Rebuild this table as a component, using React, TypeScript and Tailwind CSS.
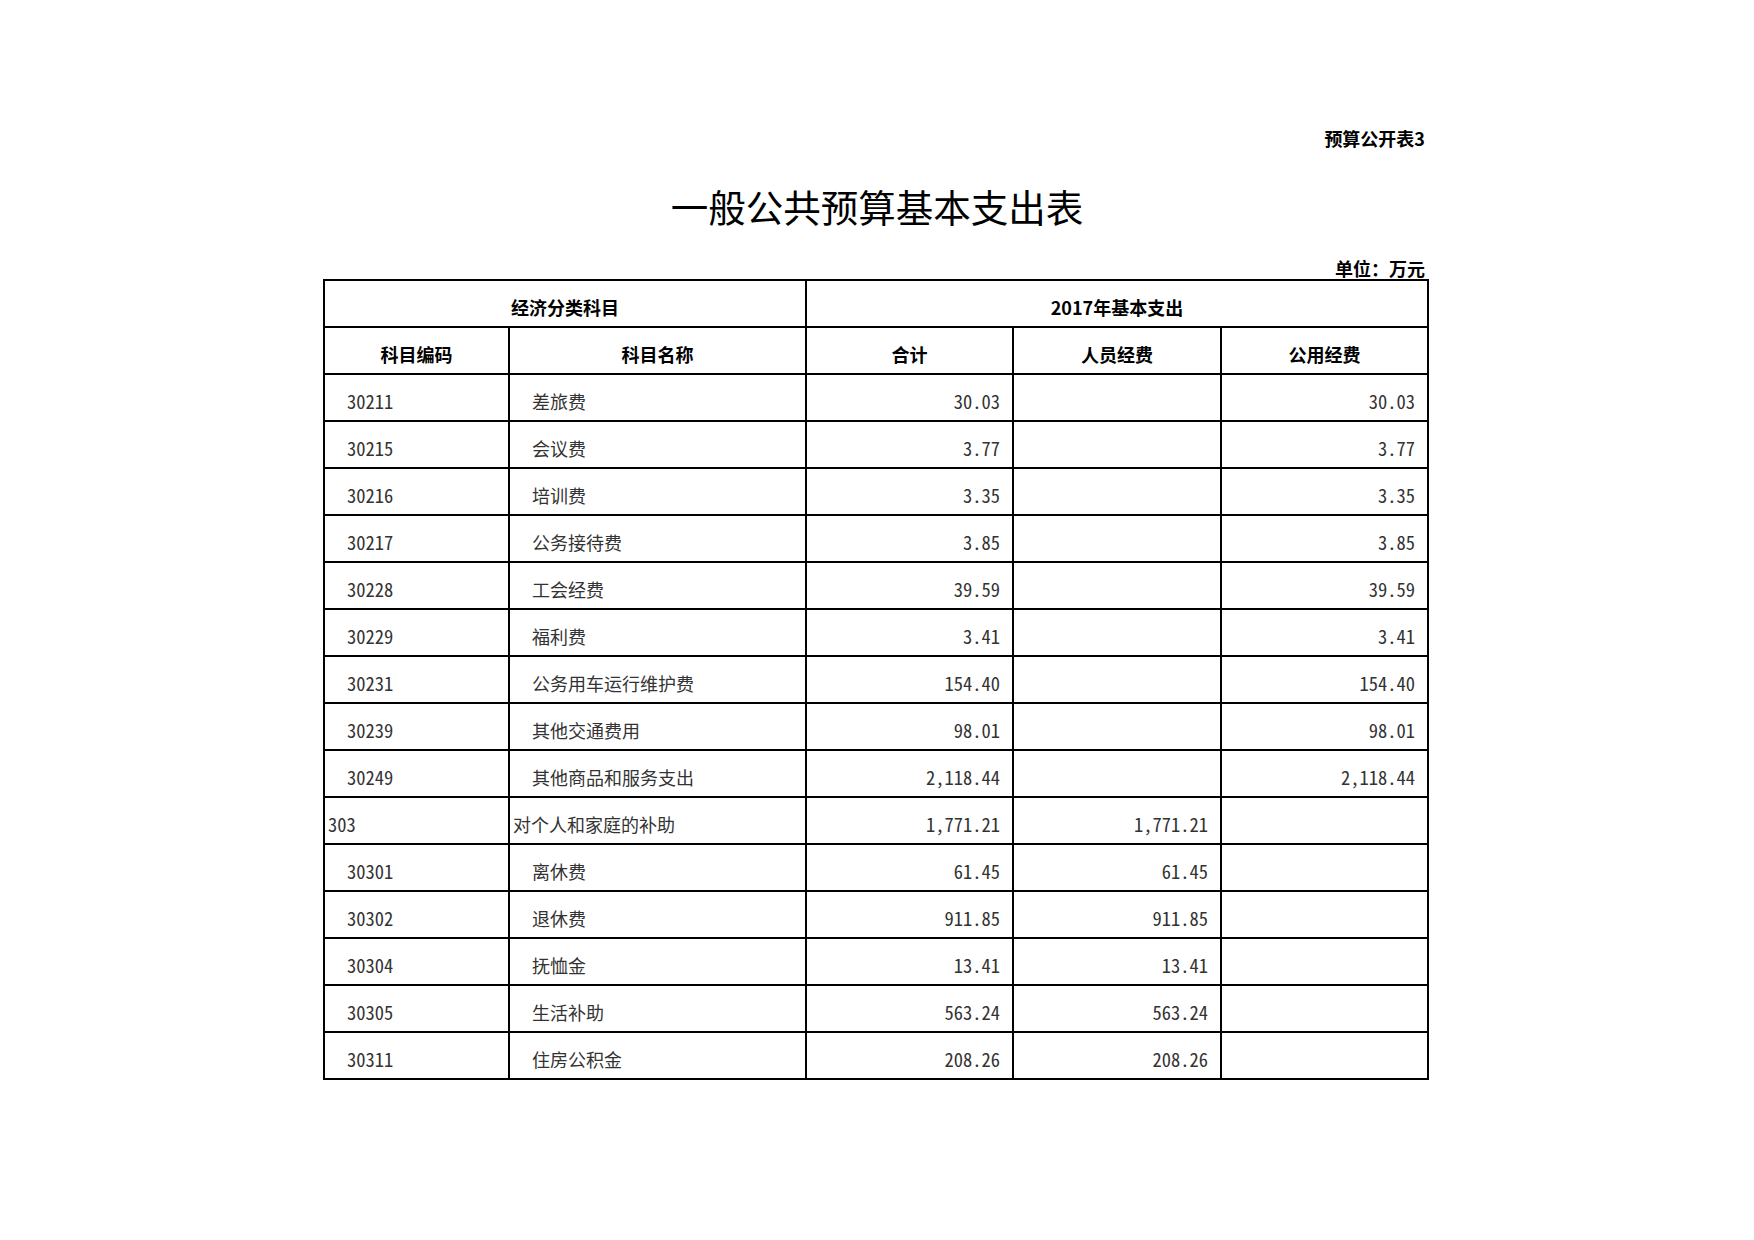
import React from "react";

type Row = {
  code: string;
  name: string;
  total: string;
  staff: string;
  pub: string;
  top?: boolean;
};

const rows: Row[] = [
  { code: "30211", name: "差旅费", total: "30.03", staff: "", pub: "30.03" },
  { code: "30215", name: "会议费", total: "3.77", staff: "", pub: "3.77" },
  { code: "30216", name: "培训费", total: "3.35", staff: "", pub: "3.35" },
  { code: "30217", name: "公务接待费", total: "3.85", staff: "", pub: "3.85" },
  { code: "30228", name: "工会经费", total: "39.59", staff: "", pub: "39.59" },
  { code: "30229", name: "福利费", total: "3.41", staff: "", pub: "3.41" },
  { code: "30231", name: "公务用车运行维护费", total: "154.40", staff: "", pub: "154.40" },
  { code: "30239", name: "其他交通费用", total: "98.01", staff: "", pub: "98.01" },
  { code: "30249", name: "其他商品和服务支出", total: "2,118.44", staff: "", pub: "2,118.44" },
  { code: "303", name: "对个人和家庭的补助", total: "1,771.21", staff: "1,771.21", pub: "", top: true },
  { code: "30301", name: "离休费", total: "61.45", staff: "61.45", pub: "" },
  { code: "30302", name: "退休费", total: "911.85", staff: "911.85", pub: "" },
  { code: "30304", name: "抚恤金", total: "13.41", staff: "13.41", pub: "" },
  { code: "30305", name: "生活补助", total: "563.24", staff: "563.24", pub: "" },
  { code: "30311", name: "住房公积金", total: "208.26", staff: "208.26", pub: "" },
];

const sans = { fontFamily: '"Noto Sans CJK SC", "Noto Sans", sans-serif' };
const mono = {
  fontFamily: '"Noto Sans Mono CJK SC", "Noto Sans CJK SC", "Liberation Mono", monospace',
};

export default function App() {
  return (
    <div className="w-[1754px] h-[1240px] bg-white text-black" style={sans}>
      <div className="w-[1108px] mx-auto pt-[126px]">
        <div className="text-right pr-[6px] text-[18px] leading-[24px] font-bold">
          预算公开表3
        </div>
        <div className="mt-[32px] text-center text-[37.5px] leading-[48px]">
          一般公共预算基本支出表
        </div>
        <div className="mt-[26px] text-right pr-[6px] text-[18px] leading-[24px] font-bold">
          单位：万元
        </div>
        <table className="table-fixed border-collapse w-[1104px] -mt-[1px]">
          <colgroup>
            <col className="w-[185px]" />
            <col className="w-[297px]" />
            <col className="w-[207px]" />
            <col className="w-[208px]" />
            <col className="w-[207px]" />
          </colgroup>
          <thead>
            <tr className="h-[47px]">
              <th
                colSpan={2}
                className="border-2 border-black text-[18px] font-bold pt-[8px] pb-0 align-middle"
              >
                经济分类科目
              </th>
              <th
                colSpan={3}
                className="border-2 border-black text-[18px] font-bold pt-[8px] pb-0 align-middle"
              >
                2017年基本支出
              </th>
            </tr>
            <tr className="h-[47px]">
              {["科目编码", "科目名称", "合计", "人员经费", "公用经费"].map((h) => (
                <th
                  key={h}
                  className="border-2 border-black text-[18px] font-bold pt-[8px] pb-0 align-middle"
                >
                  {h}
                </th>
              ))}
            </tr>
          </thead>
          <tbody className="text-[#333]">
            {rows.map((r) => (
              <tr key={r.code} className="h-[47px]">
                <td
                  className={`border-2 border-black text-[18.5px] pt-[8px] pb-0 align-middle ${
                    r.top ? "pl-[3px]" : "pl-[22px]"
                  }`}
                  style={mono}
                >
                  {r.code}
                </td>
                <td
                  className={`border-2 border-black text-[18px] pt-[8px] pb-0 align-middle ${
                    r.top ? "pl-[3px]" : "pl-[22px]"
                  }`}
                >
                  {r.name}
                </td>
                <td
                  className="border-2 border-black text-[18.5px] pt-[8px] pb-0 pr-[12px] text-right align-middle"
                  style={mono}
                >
                  {r.total}
                </td>
                <td
                  className="border-2 border-black text-[18.5px] pt-[8px] pb-0 pr-[12px] text-right align-middle"
                  style={mono}
                >
                  {r.staff}
                </td>
                <td
                  className="border-2 border-black text-[18.5px] pt-[8px] pb-0 pr-[12px] text-right align-middle"
                  style={mono}
                >
                  {r.pub}
                </td>
              </tr>
            ))}
          </tbody>
        </table>
      </div>
    </div>
  );
}
